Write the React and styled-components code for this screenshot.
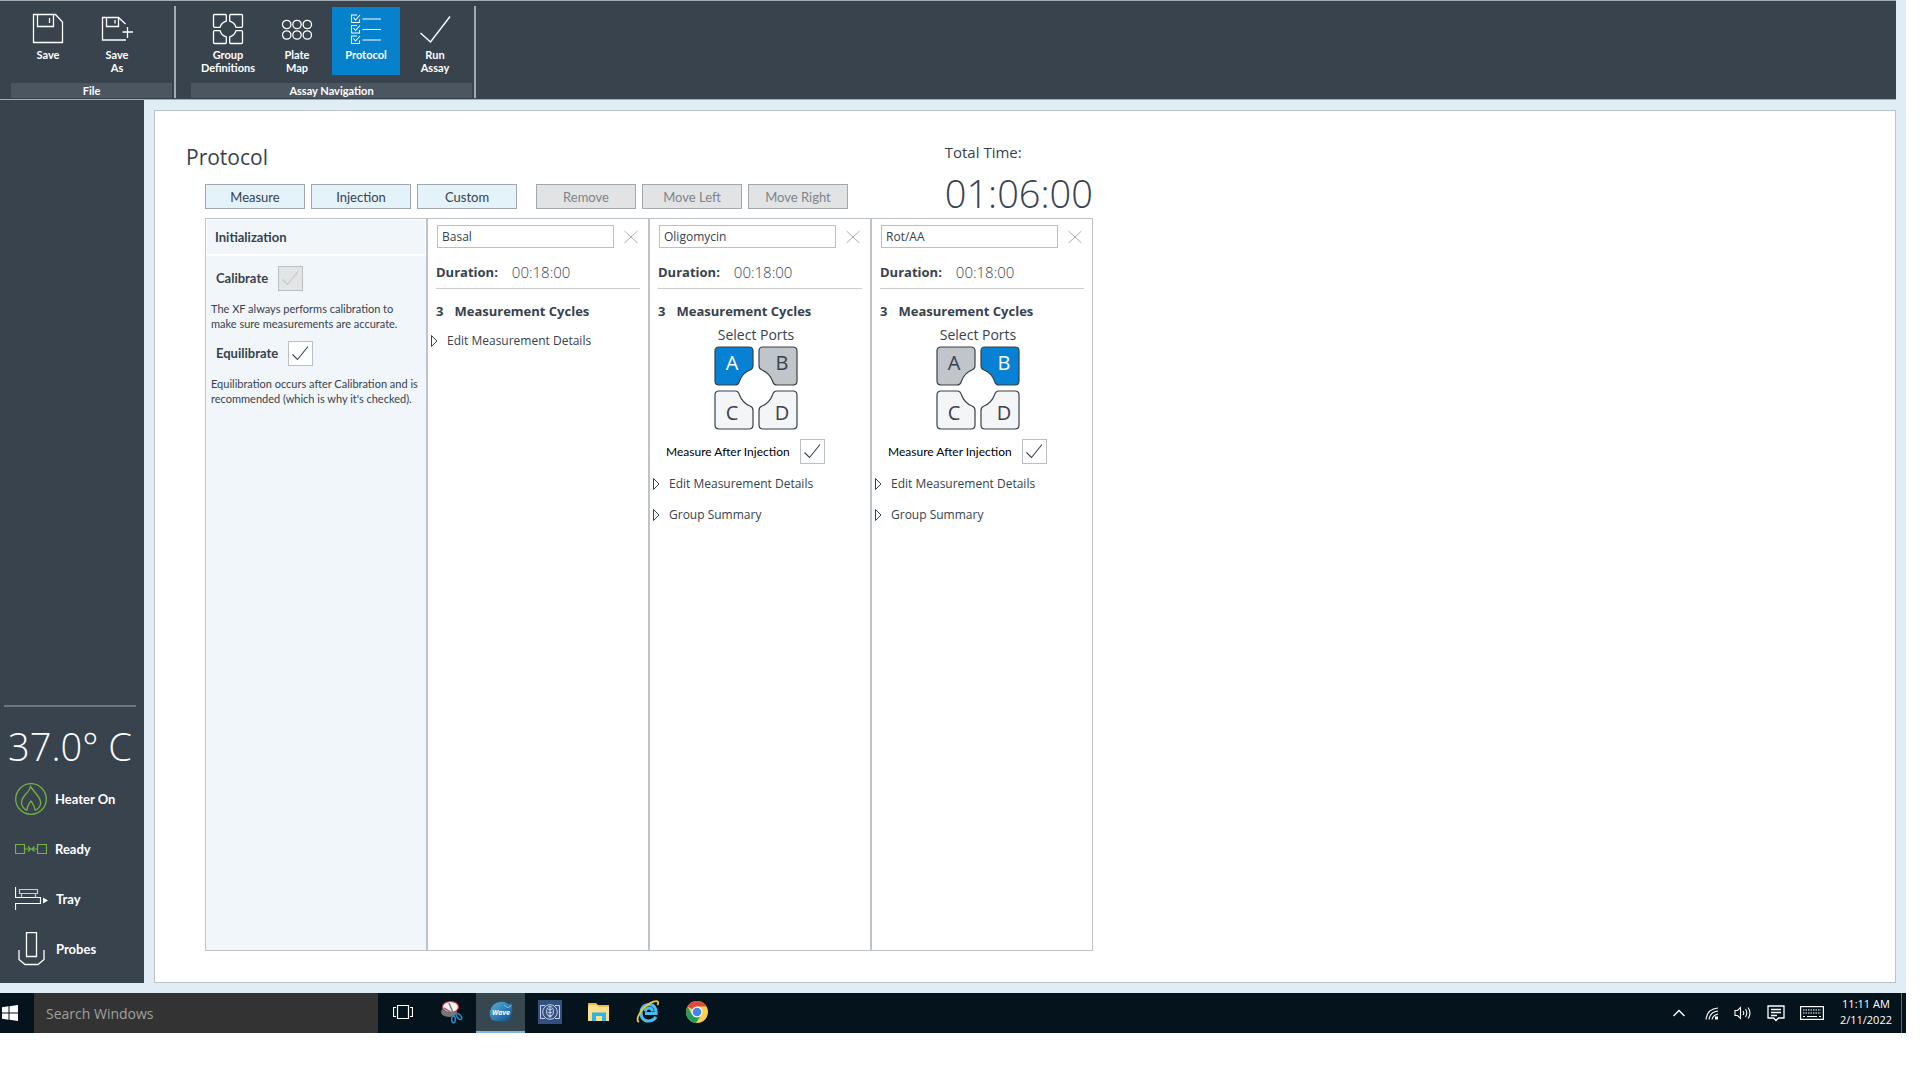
import React, { useState } from "react"
import styled, { createGlobalStyle } from "styled-components"

const GlobalStyle = createGlobalStyle`
    * {
        box-sizing: border-box;
    }

    body {
        margin: 0;
        background-color: white;
        color: #37424d;
        font-family: "Open Sans", "Noto Sans", sans-serif;
        font-size: 12px;
    }

    button, input {
        font-family: inherit;
        color: inherit;
    }

    button {
        padding: 0;
        border: none;
        background: none;
    }

    h1, h2, p {
        margin: 0;
    }
`

const narrow = `"Lato", "Open Sans", sans-serif`

const Page = styled.div`
    display: flex;
    flex-direction: column;
    min-height: 100vh;
    padding: 0 14px 47px 0;
`

const AppWindow = styled.div`
    flex: 1;
    display: flex;
    flex-direction: column;
    padding: 0 10px 10px 0;
    background-color: #e0edf5;
`

/* ---------- ribbon ---------- */

const Ribbon = styled.header`
    display: flex;
    align-items: stretch;
    height: 100px;
    padding: 5px 0 1px 11px;
    border-top: 1px solid #a3abb1;
    border-bottom: 1px solid #a3abb1;
    background-color: #38434e;
    color: white;
    font-family: ${narrow};
`

const RibbonGroup = styled.section`
    display: flex;
    flex-direction: column;
    justify-content: space-between;
    width: ${props => props.$width};
    margin-right: ${props => props.$after || "0"};
    padding-right: 2px;
    border-right: 2px solid #a3abb1;
`

const RibbonButtons = styled.div`
    display: flex;
    gap: 1px;
    padding: 1px 0 0 3px;
`

const RibbonButton = styled.button`
    display: flex;
    flex-direction: column;
    align-items: center;
    gap: 3px;
    width: 68px;
    height: 68px;
    padding-top: 6px;
    background-color: ${props => (props.$active ? "#0681cb" : "transparent")};
    color: white;
    font-size: 11px;
    font-weight: 700;
    line-height: 13px;
`

const RibbonCaption = styled.h2`
    height: 15px;
    background-color: #4c5661;
    font-size: 11px;
    font-weight: 700;
    line-height: 15px;
    text-align: center;
`

/* ---------- instrument sidebar ---------- */

const Body = styled.div`
    flex: 1;
    display: flex;
`

const Sidebar = styled.aside`
    display: flex;
    flex-direction: column;
    justify-content: flex-end;
    width: 144px;
    padding: 0 8px 9px 4px;
    background-color: #38434e;
    color: white;
`

const Temperature = styled.p`
    padding: 12px 0 1px;
    border-top: 2px solid #6a7682;
    font-size: 38px;
    font-weight: 300;
    line-height: 54px;
    white-space: nowrap;
    text-align: center;
`

const StatusRow = styled.div`
    display: flex;
    align-items: center;
    gap: 8px;
    height: 50px;
    padding-left: 11px;
    font-family: ${narrow};
    font-size: 13px;
    font-weight: 700;
`

/* ---------- protocol panel ---------- */

const Panel = styled.main`
    flex: 1;
    display: flex;
    margin: 10px 0 0 10px;
    padding: 18px 31px 31px;
    border: 1px solid #bcc4c9;
    background-color: white;
`

const Workspace = styled.div`
    display: flex;
    flex-direction: column;
`

const PanelHead = styled.div`
    display: flex;
    align-items: flex-start;
    justify-content: space-between;
`

const Title = styled.h1`
    margin: 11px 0 10px;
    font-size: 21px;
    font-weight: 400;
    line-height: 34px;
`

const Toolbar = styled.div`
    display: flex;
    gap: 6px;
    padding-left: 19px;
`

const ToolButton = styled.button`
    width: 100px;
    height: 25px;
    border: 1px solid #a0a8ad;
    background-color: #e4f2fa;
    font-family: ${narrow};
    font-size: 13px;

    &:disabled {
        background-color: #e2e3e5;
        color: #7d848b;
    }
`

const ToolGap = styled.span`
    width: 7px;
`

const TotalTime = styled.div`
    padding-top: 9px;
    font-size: 15px;
    line-height: 28px;

    strong {
        display: block;
        padding-top: 3px;
        font-size: 38px;
        font-weight: 300;
        line-height: 49px;
    }
`

const Board = styled.div`
    flex: 1;
    display: flex;
    margin-left: 19px;
    border: 1px solid #bcc4c9;
`

const Column = styled.section`
    width: 222px;
    padding: 6px 8px 0;
    border-left: 2px solid #bcc4c9;
`

const InitColumn = styled.section`
    width: 220px;
    background-color: #f1f6fb;
    font-family: ${narrow};
    font-size: 11px;
    line-height: 15px;

    p {
        padding: 10px 5px 0;
        white-space: nowrap;
    }
`

const InitTitle = styled.h2`
    height: 37px;
    padding: 0 8px;
    border: 1px solid white;
    border-bottom-width: 2px;
    font-size: 13px;
    font-weight: 700;
    line-height: 34px;
`

const InitOption = styled.label`
    display: flex;
    align-items: center;
    gap: 10px;
    margin-top: 10px;
    padding-left: 10px;
    font-size: 13px;
    font-weight: 700;
`

const TickBox = styled.span`
    display: grid;
    width: 25px;
    height: 25px;

    input, svg {
        grid-area: 1 / 1;
        width: 25px;
        height: 25px;
        margin: 0;
    }

    input {
        appearance: none;
        border: 1px solid #b9c0c5;
        background-color: white;
    }

    input:disabled {
        background-color: #e2e4e5;
    }

    svg {
        pointer-events: none;
        stroke: #37424d;
        visibility: hidden;
    }

    input:checked + svg {
        visibility: visible;
    }

    input:disabled + svg {
        stroke: #c3c8cb;
    }
`

const NameRow = styled.div`
    display: flex;
    align-items: center;
    gap: 10px;
    padding-left: 1px;
`

const NameInput = styled.input`
    width: 177px;
    height: 23px;
    padding: 0 4px;
    border: 1px solid #b9c0c5;
    font-size: 12px;
`

const RemoveButton = styled.button`
    display: flex;
`

const Duration = styled.div`
    display: flex;
    gap: 14px;
    width: 204px;
    margin-top: 8px;
    padding: 6px 0 6px;
    border-bottom: 1px solid #c8cdd0;
    font-size: 13px;
    line-height: 20px;

    span {
        font-size: 15px;
        font-weight: 300;
    }
`

const Cycles = styled.p`
    display: flex;
    gap: 11px;
    margin: 12px 0 3px;
    font-size: 13px;
    font-weight: 700;
    line-height: 20px;
`

const PortPicker = styled.div`
    display: flex;
    flex-direction: column;
    align-items: center;
    margin-top: 4px;
    padding-right: 8px;
    font-size: 14px;
    line-height: 20px;
`

const PortGrid = styled.div`
    display: grid;
    grid-template-columns: 40px 40px;
    gap: 4px;
    margin-top: 1px;
`

const PortButton = styled.button`
    height: 40px;

    svg {
        display: block;
    }

    path {
        fill: ${props => props.$fill};
        stroke: #37424d;
        stroke-width: 1.2;
    }

    text {
        fill: ${props => (props.$fill === "#0681d3" ? "white" : "#37424d")};
        font-size: 20px;
        text-anchor: middle;
    }
`

const AfterInjection = styled.label`
    display: flex;
    align-items: center;
    gap: 10px;
    margin-top: 9px;
    padding-left: 8px;
    color: black;
    font-family: ${narrow};
    font-size: 12px;
`

const Expanders = styled.div`
    display: flex;
    flex-direction: column;
    align-items: flex-start;
    gap: 11px;
    margin: 10px 0 0 -5px;
`

const ExpandButton = styled.button`
    display: flex;
    align-items: center;
    gap: 9px;
    font-size: 12px;
    line-height: 20px;
`

/* ---------- taskbar ---------- */

const Taskbar = styled.footer`
    display: flex;
    height: 40px;
    background-color: #05131c;
    color: white;
`

const StartButton = styled.button`
    display: flex;
    align-items: center;
    width: 34px;
    padding-left: 2px;
`

const SearchBox = styled.input`
    width: 344px;
    padding: 0 12px;
    border: none;
    background-color: #333333;
    font-size: 14px;

    &::placeholder {
        color: #a0a0a0;
        opacity: 1;
    }
`

const TaskButton = styled.button`
    display: flex;
    align-items: center;
    justify-content: center;
    width: 49px;
    background-color: ${props => (props.$active ? "#37474f" : "transparent")};
    border-bottom: 2px solid ${props => (props.$active ? "#83b4dc" : "transparent")};
`

const Tray = styled.div`
    display: flex;
    align-items: center;
    gap: 15px;
    margin-left: auto;
    padding-right: 4px;
`

const TrayButton = styled.button`
    display: flex;
`

const Clock = styled.time`
    height: 40px;
    padding: 3px 9px 0 1px;
    border-right: 1px solid #5d676e;
    font-size: 11px;
    line-height: 16px;
    text-align: center;
`

/* ---------- drawings ---------- */

const Line = ({ w, h, stroke = "white", width = 1, children }) => (
    <svg width={w} height={h} viewBox={`0 0 ${w} ${h}`} fill="none" stroke={stroke} strokeWidth={width} aria-hidden="true">
        {children}
    </svg>
)

const SaveIcon = () => (
    <Line w={32} h={32} width={1.3}>
        <path d="M1.5 1.5H23.5L30.5 9V29.5H1.5ZM5.5 1.5V13.5H21.5V1.5M17.5 5V10" />
    </Line>
)

const SaveAsIcon = () => (
    <Line w={32} h={32} width={1.3}>
        <path d="M25 27H1.5V4.5H17.5L24.5 11M5.5 4.5V13.5H17.5V4.5M14 7V10.5M26.5 14V25M21.5 19H32" />
    </Line>
)

const GroupIcon = () => (
    <Line w={32} h={32} width={1.3}>
        {[[1, 1], [-1, 1], [1, -1], [-1, -1]].map(([sx, sy]) => (
            <path
                key={`${sx}${sy}`}
                transform={`translate(16 16) scale(${sx} ${sy}) translate(-16 -16)`}
                d="M2.5 1.5H13.5Q14.3 1.5 14.3 2.5V8L11.5 9.3L9.3 11.5L8 14.3H2.5Q1.5 14.3 1.5 13.3V2.5Q1.5 1.5 2.5 1.5Z"
            />
        ))}
    </Line>
)

const PlateIcon = () => (
    <Line w={32} h={32} width={1.3}>
        {[5.7, 16, 26.3].map(x => [11.5, 22].map(y => <circle key={`${x}${y}`} cx={x} cy={y} r="4.2" />))}
    </Line>
)

const ProtocolIcon = () => (
    <Line w={32} h={32} width={1.1}>
        {[1.5, 12, 22.5].map(y => (
            <path key={y} transform={`translate(0 ${y})`} d="M7 0.5H1.5V8H9.5V5M3.5 3L5.5 5.5L10 0.5M12.5 4.5H31" />
        ))}
    </Line>
)

const RunIcon = () => (
    <Line w={32} h={32} width={1.4}>
        <path d="M1.5 20L11.5 29L31 3.5" />
    </Line>
)

const FlameIcon = () => (
    <Line w={32} h={32} stroke="#74b243" width={1.3}>
        <circle cx="16" cy="16" r="15.3" />
        <path d="M12 27.5C4 23 6 17 10 12Q15 7 15.5 3.5Q18 7 22.5 12.5C27 18 27 24 20 27.5M12 27.5C12 23 14 20.5 16 18C18 21 20 23 20 27.5" />
    </Line>
)

const ReadyIcon = () => (
    <Line w={32} h={32} stroke="#74b243" width={1.2}>
        <path d="M0.5 11.5H9.5V20.5H0.5ZM22.5 11.5H31.5V20.5H22.5ZM9.5 16H22.5M13 13.5L15.5 16L13 18.5M19.5 13.5L17 16L19.5 18.5" />
    </Line>
)

const TrayIcon = () => (
    <Line w={33} h={32} width={1.2}>
        <path d="M0.5 4V14.5H25.5V20.5H0.5V27" />
        <path d="M4.5 6.5H22.5V10.5H4.5ZM6.5 10.5V14M20.5 10.5V14" stroke="#c8cdd2" />
        <path d="M28 14.5L33 17.5L28 20.5Z" fill="white" stroke="none" />
    </Line>
)

const ProbeIcon = () => (
    <Line w={33} h={34} width={1.3}>
        <path d="M11.5 0.5H21.5V24.5H11.5ZM4 18V27.5L10 32.5H23L29 27.5V18" />
    </Line>
)

const Tick = () => (
    <svg viewBox="0 0 25 25" fill="none" strokeWidth="1.1" aria-hidden="true">
        <path d="M4.5 13.5L9.5 18.5L20 5.5" />
    </svg>
)

const WindowsIcon = () => (
    <svg width="17" height="16" viewBox="0 0 17 16" fill="white" aria-hidden="true">
        <path d="M0 2.3L6.5 1.3V7.5H0ZM7.5 1.2L16 0V7.5H7.5ZM0 8.5H6.5V14.7L0 13.7ZM7.5 8.5H16V16L7.5 14.8Z" />
    </svg>
)

const TaskViewIcon = () => (
    <Line w={20} h={16} width={1.2}>
        <path d="M4.5 1.5H15.5V14.5H4.5ZM3 3.5H0.5V12.5H3M17 3.5H19.5V12.5H17" />
    </Line>
)

const SnipIcon = () => (
    <svg width="24" height="24" viewBox="0 0 24 24" fill="none" aria-hidden="true">
        <ellipse cx="9" cy="12" rx="8" ry="5" fill="#74797d" />
        <ellipse cx="10.5" cy="7" rx="8" ry="5.5" fill="#f4f0f0" stroke="#cc3340" strokeWidth="1.2" />
        <path d="M9 3L14 15M4 8L15 15" stroke="#707c84" strokeWidth="1.5" />
        <ellipse cx="13.5" cy="19.5" rx="1.8" ry="3.2" stroke="#2b87bf" strokeWidth="1.5" />
        <ellipse cx="19" cy="16.5" rx="1.8" ry="3.6" transform="rotate(-40 19 16.5)" stroke="#2b87bf" strokeWidth="1.5" />
    </svg>
)

const WaveIcon = () => (
    <svg width="24" height="22" viewBox="0 0 24 22" aria-hidden="true">
        <defs>
            <linearGradient id="wave" x1="0" y1="0" x2="1" y2="1">
                <stop offset="0" stopColor="#58b4dc" />
                <stop offset="1" stopColor="#0c4d8c" />
            </linearGradient>
        </defs>
        <path d="M1 10Q3 2 11 1Q16 0 19 3Q22 4 22 2Q24 5 23 12Q22 19 17 20Q8 21 3 19Q0 15 1 10Z" fill="url(#wave)" />
        <path d="M15 4Q20 9 22 4" stroke="#7cc8e8" fill="none" />
        <text x="12" y="14" fill="white" fontSize="7" fontWeight="700" fontStyle="italic" textAnchor="middle">Wave</text>
    </svg>
)

const CameraIcon = () => (
    <svg width="24" height="24" viewBox="0 0 24 24" fill="none" stroke="#c5d3ec" aria-hidden="true">
        <rect width="24" height="24" fill="#34507f" stroke="none" />
        <path d="M7 5.5H2.5V18.5H7M17 5.5H21.5V18.5H17M12 7V18M10 9L12 10L14 9M9.5 12L12 13L14.5 12M10 15L12 16L14 15" />
        <circle cx="12" cy="12" r="7.3" />
        <ellipse cx="12" cy="11.5" rx="3.5" ry="5" />
    </svg>
)

const FolderIcon = () => (
    <svg width="24" height="22" viewBox="0 0 24 22" aria-hidden="true">
        <path d="M1 3Q1 2 2 2H9L11 4H22V20H1Z" fill="#e9bd4c" />
        <path d="M3 4H10L12 6H22V20H1V6Z" fill="#fbe08b" />
        <path d="M5 20V11.5H19V20H15V15H9V20Z" fill="#2cb3e8" />
    </svg>
)

const ExplorerIcon = () => (
    <svg width="24" height="24" viewBox="0 0 24 24" fill="none" aria-hidden="true">
        <path d="M20 17Q17 21 12.5 21C7 21 5 17 5 13C5 8 8 4.5 13 4.5C18 4.5 20.5 8.5 20 13.5H9M9 11.5Q10 8 13 8Q16 8 16.5 11.5" stroke="#4cbcf0" strokeWidth="3.2" />
        <path d="M3 22C-1 20 4 11 10 6C15 1.5 21 0 22 2Q22.5 3 21.5 5" stroke="#f0c43c" strokeWidth="1.8" />
    </svg>
)

const ChromeIcon = () => (
    <svg width="24" height="24" viewBox="0 0 24 24" aria-hidden="true">
        <circle cx="12" cy="12" r="11" fill="#fbd04b" />
        <path d="M12 12L2.5 6.5A11 11 0 0 1 21.5 6.5H12Z" fill="#dd4b3e" />
        <path d="M2.5 6.5A11 11 0 0 0 11 23L16.5 14.5L12 12L7 14.5Z" fill="#269b5c" />
        <circle cx="12" cy="12" r="5.5" fill="white" />
        <circle cx="12" cy="12" r="4.3" fill="#4482ee" />
    </svg>
)

const ChevronIcon = () => (
    <Line w={18} h={8} width={1.4}>
        <path d="M1.5 7L7 1.5L12.5 7" />
    </Line>
)

const WifiIcon = () => (
    <Line w={14} h={14} width={1.1}>
        <path d="M1 13.5Q2 3 13 2M4 13.5Q5 6 13 5M7 13.5Q8 9 13 8" />
        <rect x="10" y="10.5" width="3" height="3" fill="white" stroke="none" />
    </Line>
)

const SpeakerIcon = () => (
    <Line w={18} h={16} width={1.1}>
        <path d="M1 5.5H3.5L6.5 2.5V13.5L3.5 10.5H1ZM9 6Q10.5 8 9 10M11.5 4Q14 8 11.5 12M14 2.5Q18 8 14 13.5" />
    </Line>
)

const MessageIcon = () => (
    <Line w={18} h={17} width={1.3}>
        <path d="M1 1H17V13H11.5L9 15.5L6.5 13H1ZM4 4.5H14M4 7.5H14M4 10.5H10" />
    </Line>
)

const KeyboardIcon = () => (
    <Line w={24} h={14} width={1.2}>
        <rect x="0.6" y="0.6" width="22.8" height="12.8" />
        <path d="M3 4H21M3 7H21" strokeDasharray="1.5 1" />
        <path d="M3 10.5H5M7 10.5H17M19 10.5H21" />
    </Line>
)

const PORT_SHAPE = "M5 1H35Q39 1 39 5V19.5Q39 23 36 24Q28.5 27 25.5 35Q24.5 39 21 39H5Q1 39 1 35V5Q1 1 5 1Z"

const PORTS = [
    { id: "A", x: 18, y: 24, flip: "" },
    { id: "B", x: 24, y: 24, flip: "translate(40 0) scale(-1 1)" },
    { id: "C", x: 18, y: 30, flip: "translate(0 40) scale(1 -1)" },
    { id: "D", x: 24, y: 30, flip: "translate(40 40) scale(-1 -1)" },
]

/* ---------- components ---------- */

const CheckBox = props => (
    <TickBox>
        <input type="checkbox" {...props} />
        <Tick />
    </TickBox>
)

const Expander = ({ children }) => (
    <ExpandButton type="button">
        <Line w={7} h={12} stroke="#37424d">
            <path d="M0.5 0.5L6 6L0.5 11.5Z" />
        </Line>
        {children}
    </ExpandButton>
)

const portFill = (id, selected, used) => {
    if (id === selected) return "#0681d3"
    return id === used ? "#bfc5c8" : "#f4f5f6"
}

const Ports = ({ initial, used }) => {
    const [selected, setSelected] = useState(initial)

    return (
        <PortPicker>
            Select Ports
            <PortGrid>
                {PORTS.map(port => (
                    <PortButton
                        key={port.id}
                        type="button"
                        $fill={portFill(port.id, selected, used)}
                        onClick={() => setSelected(port.id)}
                    >
                        <svg width="40" height="40" viewBox="0 0 40 40">
                            <path d={PORT_SHAPE} transform={port.flip} />
                            <text x={port.x} y={port.y}>{port.id}</text>
                        </svg>
                    </PortButton>
                ))}
            </PortGrid>
        </PortPicker>
    )
}

const Step = ({ name, port, used }) => (
    <Column>
        <NameRow>
            <NameInput aria-label="Step name" defaultValue={name} />
            <RemoveButton type="button" aria-label={`Remove ${name}`}>
                <Line w={14} h={14} stroke="#a9b0b5">
                    <path d="M0.5 1L13.5 13M13.5 1L0.5 13" />
                </Line>
            </RemoveButton>
        </NameRow>
        <Duration>
            <strong>Duration:</strong>
            <span>00:18:00</span>
        </Duration>
        <Cycles>
            <span>3</span>
            <span>Measurement Cycles</span>
        </Cycles>
        {port && <Ports initial={port} used={used} />}
        {port && (
            <AfterInjection>
                Measure After Injection
                <CheckBox defaultChecked />
            </AfterInjection>
        )}
        <Expanders>
            <Expander>Edit Measurement Details</Expander>
            {port && <Expander>Group Summary</Expander>}
        </Expanders>
    </Column>
)

const RibbonItem = ({ icon, label, active }) => (
    <RibbonButton type="button" $active={active}>
        {icon}
        <span>{label}</span>
    </RibbonButton>
)

const App = () => {
    return (
        <Page>
            <GlobalStyle />
            <AppWindow>
                <Ribbon>
                    <RibbonGroup $width="165px" $after="15px">
                        <RibbonButtons>
                            <RibbonItem icon={<SaveIcon />} label="Save" />
                            <RibbonItem icon={<SaveAsIcon />} label={<>Save<br />As</>} />
                        </RibbonButtons>
                        <RibbonCaption>File</RibbonCaption>
                    </RibbonGroup>
                    <RibbonGroup $width="285px">
                        <RibbonButtons>
                            <RibbonItem icon={<GroupIcon />} label={<>Group<br />Definitions</>} />
                            <RibbonItem icon={<PlateIcon />} label={<>Plate<br />Map</>} />
                            <RibbonItem icon={<ProtocolIcon />} label="Protocol" active />
                            <RibbonItem icon={<RunIcon />} label={<>Run<br />Assay</>} />
                        </RibbonButtons>
                        <RibbonCaption>Assay Navigation</RibbonCaption>
                    </RibbonGroup>
                </Ribbon>

                <Body>
                    <Sidebar>
                        <Temperature>37.0° C</Temperature>
                        <StatusRow><FlameIcon />Heater On</StatusRow>
                        <StatusRow><ReadyIcon />Ready</StatusRow>
                        <StatusRow><TrayIcon />Tray</StatusRow>
                        <StatusRow><ProbeIcon />Probes</StatusRow>
                    </Sidebar>

                    <Panel>
                        <Workspace>
                            <PanelHead>
                                <div>
                                    <Title>Protocol</Title>
                                    <Toolbar>
                                        <ToolButton type="button">Measure</ToolButton>
                                        <ToolButton type="button">Injection</ToolButton>
                                        <ToolButton type="button">Custom</ToolButton>
                                        <ToolGap />
                                        <ToolButton type="button" disabled>Remove</ToolButton>
                                        <ToolButton type="button" disabled>Move Left</ToolButton>
                                        <ToolButton type="button" disabled>Move Right</ToolButton>
                                    </Toolbar>
                                </div>
                                <TotalTime>
                                    Total Time:
                                    <strong>01:06:00</strong>
                                </TotalTime>
                            </PanelHead>

                            <Board>
                                <InitColumn>
                                    <InitTitle>Initialization</InitTitle>
                                    <InitOption>
                                        Calibrate
                                        <CheckBox defaultChecked disabled />
                                    </InitOption>
                                    <p>
                                        The XF always performs calibration to<br />
                                        make sure measurements are accurate.
                                    </p>
                                    <InitOption>
                                        Equilibrate
                                        <CheckBox defaultChecked />
                                    </InitOption>
                                    <p>
                                        Equilibration occurs after Calibration and is<br />
                                        recommended (which is why it's checked).
                                    </p>
                                </InitColumn>
                                <Step name="Basal" />
                                <Step name="Oligomycin" port="A" used="B" />
                                <Step name="Rot/AA" port="B" used="A" />
                            </Board>
                        </Workspace>
                    </Panel>
                </Body>
            </AppWindow>

            <Taskbar>
                <StartButton type="button" aria-label="Start"><WindowsIcon /></StartButton>
                <SearchBox placeholder="Search Windows" aria-label="Search Windows" />
                <TaskButton type="button" aria-label="Task View"><TaskViewIcon /></TaskButton>
                <TaskButton type="button" aria-label="Snipping Tool"><SnipIcon /></TaskButton>
                <TaskButton type="button" aria-label="Wave" $active><WaveIcon /></TaskButton>
                <TaskButton type="button" aria-label="Camera"><CameraIcon /></TaskButton>
                <TaskButton type="button" aria-label="File Explorer"><FolderIcon /></TaskButton>
                <TaskButton type="button" aria-label="Internet Explorer"><ExplorerIcon /></TaskButton>
                <TaskButton type="button" aria-label="Chrome"><ChromeIcon /></TaskButton>
                <Tray>
                    <TrayButton type="button" aria-label="Show hidden icons"><ChevronIcon /></TrayButton>
                    <TrayButton type="button" aria-label="Network"><WifiIcon /></TrayButton>
                    <TrayButton type="button" aria-label="Volume"><SpeakerIcon /></TrayButton>
                    <TrayButton type="button" aria-label="Notifications"><MessageIcon /></TrayButton>
                    <TrayButton type="button" aria-label="Touch keyboard"><KeyboardIcon /></TrayButton>
                    <Clock>11:11 AM<br />2/11/2022</Clock>
                </Tray>
            </Taskbar>
        </Page>
    )
}

export default App
